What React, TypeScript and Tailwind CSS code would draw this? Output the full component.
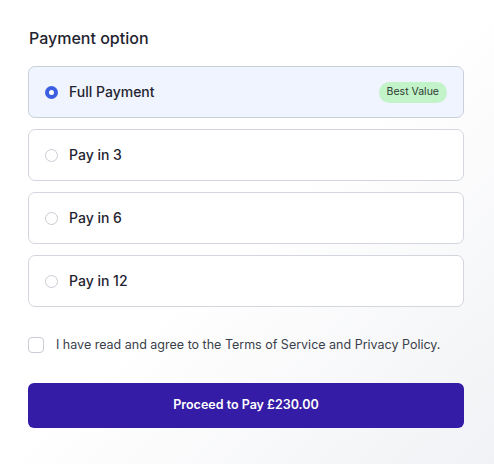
import React, { useState } from "react";

const options = ["Full Payment", "Pay in 3", "Pay in 6", "Pay in 12"];

export default function App() {
  const [sel, setSel] = useState(0);
  return (
    <div
      className="w-[494px] h-[464px] bg-gradient-to-br from-white via-white to-[#f1f2f5] px-[28px] pt-[28px]"
      style={{ fontFamily: "Inter, 'Noto Sans', sans-serif" }}
    >
      <div className="w-[436px]">
        <h2 className="text-[16px] leading-[20px] font-medium text-[#1f2430] ml-[1px]">Payment option</h2>
        <div className="mt-[18px] flex flex-col gap-[11px]">
          {options.map((o, i) => {
            const active = i === sel;
            return (
              <button
                key={o}
                onClick={() => setSel(i)}
                className={
                  active
                    ? "h-[52px] flex items-center pl-[16px] pr-[16px] rounded-[7px] border border-[#c9cfdc] bg-[#eff4fe] text-left"
                    : "h-[52px] flex items-center pl-[16px] pr-[16px] rounded-[7px] border border-[#d3d6dd] bg-white text-left"
                }
              >
                {active ? (
                  <span className="w-[13px] h-[13px] rounded-full border-[4px] border-[#3b5fe0] bg-white shrink-0" />
                ) : (
                  <span className="w-[13px] h-[13px] rounded-full border border-[#c9ccd3] bg-white shrink-0" />
                )}
                <span className="ml-[11px] text-[14px] leading-[20px] font-medium text-[#1f2430]">{o}</span>
                {active && (
                  <span className="ml-auto h-[21px] px-[8px] flex items-center rounded-full bg-[#c3f3c9] text-[10.5px] text-[#2f3a33]">
                    Best Value
                  </span>
                )}
              </button>
            );
          })}
        </div>
        <label className="mt-[28px] flex items-center h-[20px]">
          <span className="w-[16px] h-[16px] rounded-[4px] border border-[#c9ccd3] bg-white shrink-0" />
          <span className="ml-[12px] text-[12.5px] leading-[20px] text-[#3a3f4a]">
            I have read and agree to the Terms of Service and Privacy Policy.
          </span>
        </label>
        <button className="mt-[28px] w-full h-[45px] rounded-[6px] bg-[#351ca6] text-white text-[12.5px] font-semibold">
          Proceed to Pay £230.00
        </button>
      </div>
    </div>
  );
}
